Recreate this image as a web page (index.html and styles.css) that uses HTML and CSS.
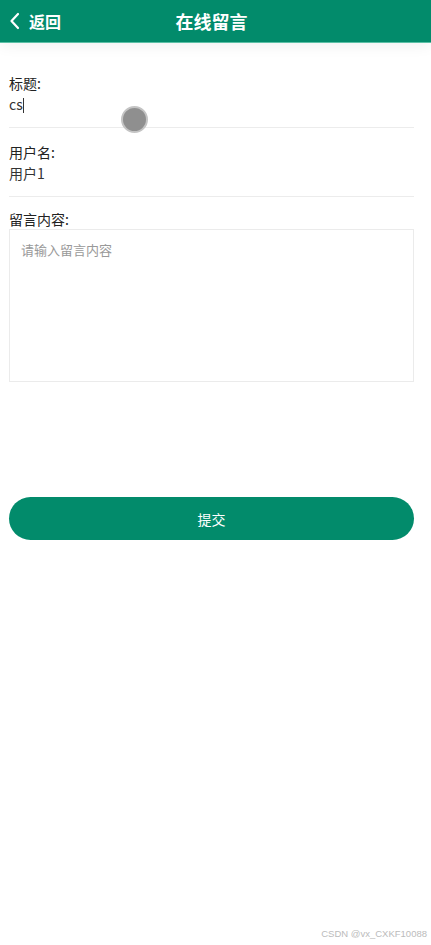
FILE: index.html
```html
<!DOCTYPE html>
<html lang="zh-CN">
<head>
  <meta charset="UTF-8" />
  <meta name="viewport" content="width=device-width, initial-scale=1.0" />
  <title>在线留言</title>
  <link rel="stylesheet" href="styles.css">
</head>
<body>

  <header class="topbar">
    <a class="back" href="#">
      <svg width="12" height="18" viewBox="0 0 12 18"><path d="M9 2 L2.5 9 L9 16" fill="none" stroke="#fff" stroke-width="2.2" stroke-linecap="round" stroke-linejoin="round"/></svg>
      <span>返回</span>
    </a>
    <h1>在线留言</h1>
  </header>

  <form class="form">
    <div class="field">
      <label>标题:</label>
      <div class="value">cs<span class="caret"></span></div>
    </div>
    <div class="field">
      <label>用户名:</label>
      <div class="value">用户1</div>
    </div>
    <div class="field last">
      <label>留言内容:</label>
      <textarea placeholder="请输入留言内容"></textarea>
    </div>

    <button type="button" class="submit">提交</button>
  </form>

  <div class="touch"></div>
  <div class="mark">CSDN @vx_CXKF10088</div>

</body>
</html>
```

FILE: styles.css
```css
* {
  box-sizing: border-box;
  margin: 0;
  padding: 0;
}

body {
  font-family: "Noto Sans CJK SC", "Liberation Sans", sans-serif;
  background: #fff;
  color: #222;
  width: 431px;
  height: 945px;
  position: relative;
  overflow: hidden;
}

.topbar {
  height: 43px;
  background: #028b6b;
  border-bottom: 1px solid #5cc0a6;
  display: flex;
  align-items: center;
  position: relative;
  box-shadow: 0 4px 14px rgba(0,0,0,0.05);
}

.back {
  display: flex;
  align-items: center;
  gap: 8px;
  padding-left: 9px;
  color: #fff;
  text-decoration: none;
  font-size: 16px;
  font-weight: bold;
}

.topbar h1 {
  position: absolute;
  left: 0;
  right: 8px;
  text-align: center;
  color: #fff;
  font-size: 18px;
  font-weight: bold;
  pointer-events: none;
}

.form {
  padding: 29px 17px 0 9px;
}

.field {
  border-bottom: 1px solid #ececec;
  padding-bottom: 12px;
  margin-bottom: 13px;
}

.field label {
  display: block;
  font-size: 14px;
  line-height: 22px;
}

.field .value {
  font-size: 14px;
  line-height: 21px;
  color: #333;
}

.caret {
  display: inline-block;
  width: 1px;
  height: 15px;
  background: #333;
  vertical-align: -3px;
}

.field.last {
  border-bottom: none;
  margin-bottom: 0;
  padding-bottom: 0;
}

.field.last label {
  line-height: 19px;
}

.field textarea {
  display: block;
  width: 100%;
  height: 153px;
  border: 1px solid #ebebeb;
  padding: 10px 11px;
  font-family: inherit;
  font-size: 13px;
  resize: none;
  outline: none;
}

.field textarea::placeholder {
  color: #999;
}

.submit {
  display: block;
  width: 100%;
  height: 43px;
  margin-top: 115px;
  border: none;
  border-radius: 22px;
  background: #028b6b;
  color: #fff;
  font-family: inherit;
  font-size: 14px;
  cursor: pointer;
}

.touch {
  position: absolute;
  left: 121px;
  top: 106px;
  width: 27px;
  height: 27px;
  border-radius: 50%;
  background: #8f8f8f;
  border: 2px solid #c4c4c4;
}

.mark {
  position: absolute;
  right: 4px;
  bottom: 6px;
  font-family: "Liberation Sans", sans-serif;
  font-size: 9.5px;
  color: #bbb;
}
```
